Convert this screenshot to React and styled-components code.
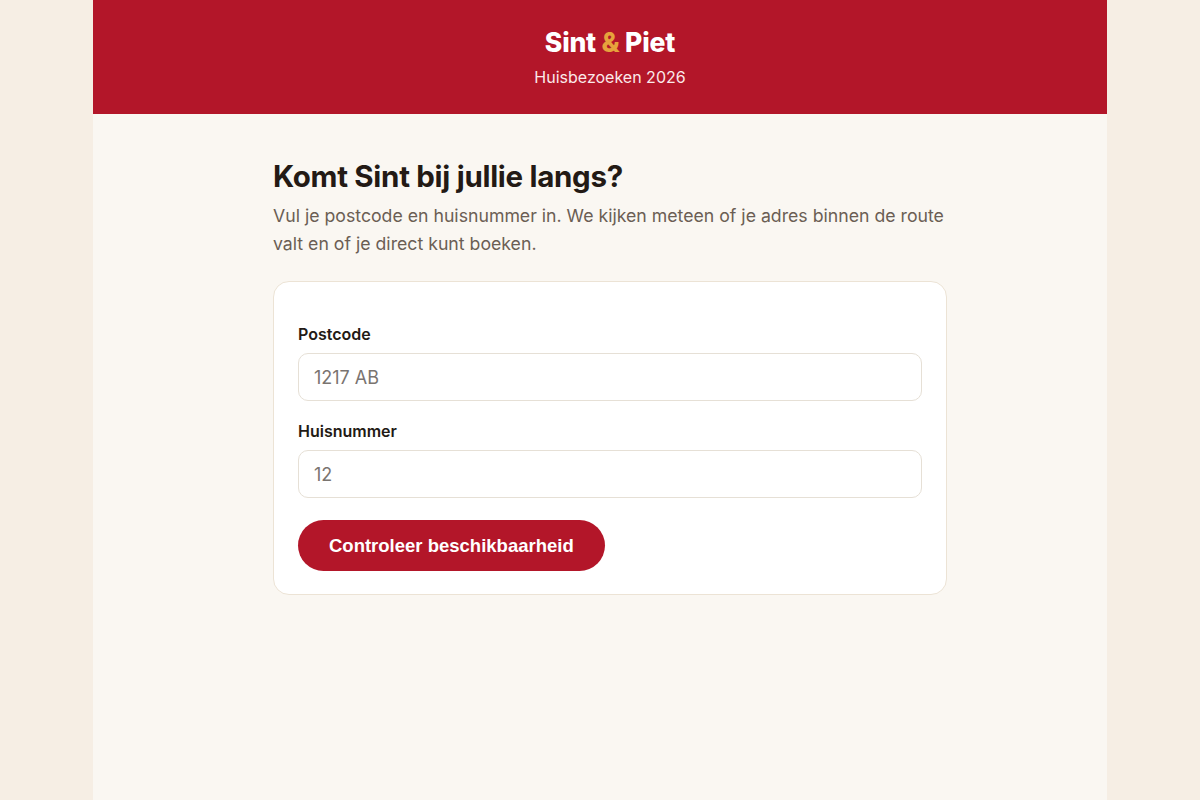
import React from "react";
import styled, { createGlobalStyle } from "styled-components";

const Global = createGlobalStyle`
  html, body { margin: 0; padding: 0; }
  body {
    background: #f6eee4;
    font-family: Inter, "Noto Sans", sans-serif;
    -webkit-font-smoothing: antialiased;
  }
  * { box-sizing: border-box; }
`;

const Page = styled.div`
  width: 1014px;
  min-height: 800px;
  margin: 0 auto;
  background: #faf7f2;
`;

const Header = styled.header`
  background: #b31629;
  padding: 26px 0 27px 20px;
  text-align: center;
  color: #fff;
`;

const Brand = styled.h1`
  margin: 0;
  font-size: 26.5px;
  line-height: 32px;
  font-weight: 800;
  letter-spacing: -0.2px;
`;

const Amp = styled.span`
  color: #e6a23c;
`;

const Sub = styled.div`
  margin-top: 9px;
  font-size: 16px;
  line-height: 20px;
  color: #fbe9ea;
`;

const Main = styled.main`
  width: 694px;
  margin: 0 auto;
  padding: 44px 0 0 20px;
`;

const Title = styled.h2`
  margin: 0;
  font-size: 29.5px;
  line-height: 36px;
  font-weight: 700;
  color: #231a15;
  letter-spacing: -0.3px;
`;

const Intro = styled.p`
  margin: 8px 0 0;
  font-size: 17.7px;
  line-height: 28px;
  color: #6b5e54;
`;

const Card = styled.form`
  margin-top: 23px;
  background: #fff;
  border: 1px solid #ece3d5;
  border-radius: 16px;
  padding: 42px 24px 23px;
  display: flex;
  flex-direction: column;
`;

const Label = styled.label`
  font-size: 16px;
  line-height: 20px;
  font-weight: 600;
  color: #231a15;
  margin-top: ${(p) => (p.$first ? "0" : "20px")};
`;

const Input = styled.input`
  margin-top: 9px;
  height: 48px;
  width: 100%;
  border: 1px solid #e6e0d6;
  border-radius: 10px;
  padding: 0 15px;
  font-family: Inter, "Noto Sans", sans-serif;
  font-size: 18px;
  color: #231a15;
  background: #fff;
  outline: none;
  &::placeholder { color: #7a7470; }
`;

const Button = styled.button`
  margin-top: 22px;
  align-self: flex-start;
  height: 51px;
  padding: 0 31px;
  border: none;
  border-radius: 999px;
  background: #b31629;
  color: #fff;
  font-family: "Liberation Sans", Arial, sans-serif;
  font-weight: 700;
  font-size: 18.5px;
  cursor: pointer;
`;

export default function App() {
  return (
    <>
      <Global />
      <Page>
        <Header>
          <Brand>
            Sint <Amp>&amp;</Amp> Piet
          </Brand>
          <Sub>Huisbezoeken 2026</Sub>
        </Header>
        <Main>
          <Title>Komt Sint bij jullie langs?</Title>
          <Intro>
            Vul je postcode en huisnummer in. We kijken meteen of je adres binnen de route
            valt en of je direct kunt boeken.
          </Intro>
          <Card onSubmit={(e) => e.preventDefault()}>
            <Label $first htmlFor="pc">Postcode</Label>
            <Input id="pc" placeholder="1217 AB" />
            <Label htmlFor="hn">Huisnummer</Label>
            <Input id="hn" placeholder="12" />
            <Button type="submit">Controleer beschikbaarheid</Button>
          </Card>
        </Main>
      </Page>
    </>
  );
}
